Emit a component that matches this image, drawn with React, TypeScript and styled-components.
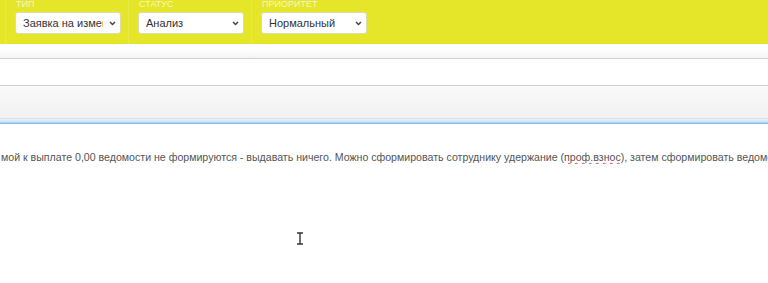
import React from "react";
import styled, { createGlobalStyle } from "styled-components";

const GlobalStyle = createGlobalStyle`
  html, body {
    margin: 0;
    padding: 0;
    background: #ffffff;
    overflow: hidden;
    font-family: "Liberation Sans", Arial, sans-serif;
  }
`;

const Page = styled.div`
  position: relative;
  width: 768px;
  height: 283px;
  overflow: hidden;
  background: #ffffff;
`;

const FilterBar = styled.div`
  display: flex;
  height: 44px;
  padding-left: 5px;
  background: #e5e629;
`;

const FilterGroup = styled.div`
  display: flex;
  flex-direction: column;
  width: 106px;
  padding: 0 7px 0 9px;
  border-left: 1px solid #e9ea45;
`;

const FilterLabel = styled.div`
  height: 13px;
  font-size: 9px;
  line-height: 10px;
  color: rgba(255, 255, 255, 0.72);
  text-transform: uppercase;
  margin-top: -1px;
  padding-left: 1px;
`;

const FakeSelect = styled.div`
  display: flex;
  align-items: center;
  height: 22px;
  border-radius: 3px;
  background: #ffffff;
  border: 1px solid #dcdcae;
  box-sizing: border-box;
  padding: 0 4px 0 7px;
  font-size: 11px;
  color: #333333;
`;

const SelectText = styled.span`
  flex: 1;
  overflow: hidden;
  white-space: nowrap;
`;

const Chevron = styled.svg`
  flex: none;
  width: 7px;
  height: 5px;
  margin-left: 6px;
`;

const TopStrip = styled.div`
  height: 14px;
  background: linear-gradient(#ffffff 0%, #ffffff 40%, #f4f4f4 100%);
  border-bottom: 1px solid #cfcfcf;
`;

const BlankRow = styled.div`
  height: 26px;
  background: #ffffff;
  border-bottom: 1px solid #cfcfcf;
`;

const Toolbar = styled.div`
  height: 32px;
  background: linear-gradient(#fafafa, #f1f1f1);
  border-bottom: 1px solid #dedede;
`;

const FocusLine = styled.div`
  height: 5px;
  background: linear-gradient(#e8f2fb, #cfe4f6 50%, #7fb6e6);
`;

const Body = styled.div`
  padding-top: 27px;
`;

const Paragraph = styled.div`
  font-size: 10.6px;
  line-height: 13px;
  color: #555555;
  white-space: nowrap;
  overflow: hidden;
  padding-left: 1px;
`;

const Misspelled = styled.span`
  text-decoration-line: underline;
  text-decoration-style: wavy;
  text-decoration-color: #e0413c;
  text-decoration-thickness: 1px;
  text-decoration-skip-ink: none;
  text-underline-offset: 1px;
`;

const Cursor = styled.svg`
  position: absolute;
  left: 296px;
  top: 232px;
  width: 8px;
  height: 13px;
`;

const filters = [
  { label: "Тип", value: "Заявка на изменение" },
  { label: "Статус", value: "Анализ" },
  { label: "Приоритет", value: "Нормальный" },
];

export default function App() {
  return (
    <Page>
      <GlobalStyle />
      <FilterBar>
        {filters.map((f) => (
          <FilterGroup key={f.label}>
            <FilterLabel>{f.label}</FilterLabel>
            <FakeSelect>
              <SelectText>{f.value}</SelectText>
              <Chevron viewBox="0 0 7 5">
                <path d="M1 1 L3.5 3.5 L6 1" fill="none" stroke="#444" strokeWidth="1.5" />
              </Chevron>
            </FakeSelect>
          </FilterGroup>
        ))}
      </FilterBar>
      <TopStrip />
      <BlankRow />
      <Toolbar />
      <FocusLine />
      <Body>
        <Paragraph>
          мой к выплате 0,00 ведомости не формируются - выдавать ничего. Можно сформировать сотруднику удержание (
          <Misspelled>проф.взнос</Misspelled>), затем сформировать ведомость
        </Paragraph>
      </Body>
      <Cursor viewBox="0 0 8 13">
        <path d="M1 1 H7 M4 1 V12 M1 12 H7" fill="none" stroke="#333" strokeWidth="1.4" />
      </Cursor>
    </Page>
  );
}
